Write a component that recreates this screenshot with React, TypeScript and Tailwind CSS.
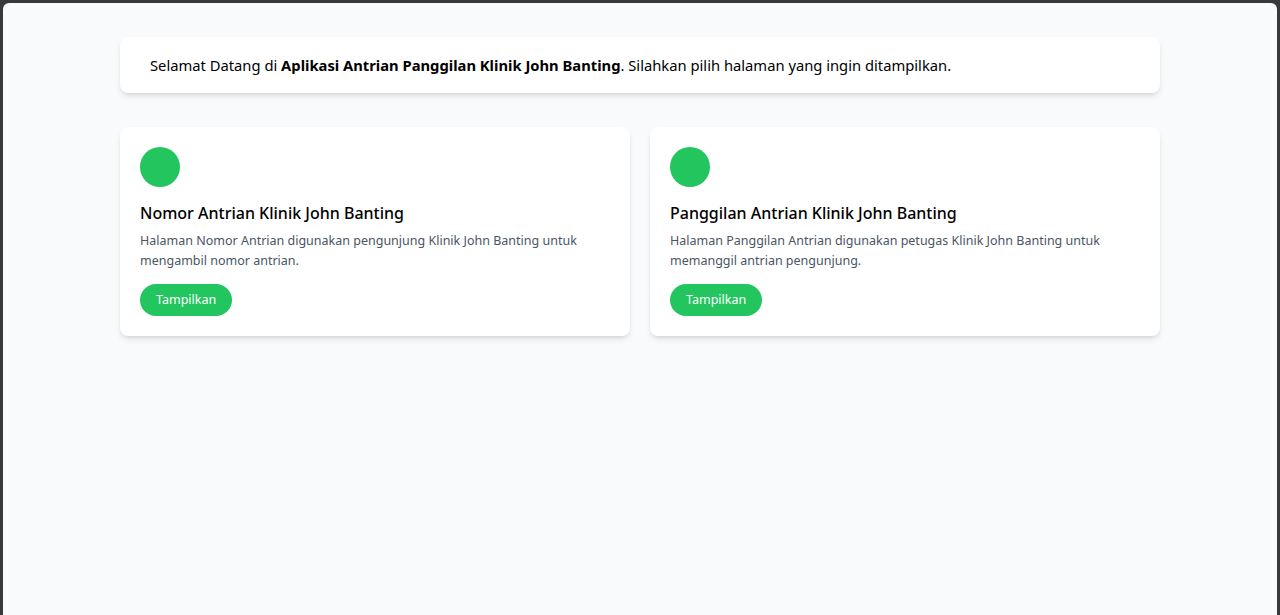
const cards = [
  {
    title: "Nomor Antrian Klinik John Banting",
    desc: "Halaman Nomor Antrian digunakan pengunjung Klinik John Banting untuk mengambil nomor antrian.",
  },
  {
    title: "Panggilan Antrian Klinik John Banting",
    desc: "Halaman Panggilan Antrian digunakan petugas Klinik John Banting untuk memanggil antrian pengunjung.",
  },
];

const App = () => {
  return (
    <div className="w-full h-[615px] bg-[#3a3a3a] pt-[3px] px-[3px] font-['Noto_Sans',sans-serif]">
      <main className="h-full bg-gray-50 rounded-t-md pt-[34px]">
        <div className="w-[1040px] mx-auto">
          <section className="bg-white rounded-lg shadow-md px-[30px] h-14 flex items-center text-[14.75px] text-black">
            <p>
              Selamat Datang di{" "}
              <span className="font-bold">Aplikasi Antrian Panggilan Klinik John Banting</span>.
              Silahkan pilih halaman yang ingin ditampilkan.
            </p>
          </section>

          <div className="grid grid-cols-2 gap-5 mt-[34px]">
            {cards.map((card) => (
              <div key={card.title} className="bg-white rounded-lg shadow-md p-5">
                <div className="w-10 h-10 rounded-full bg-[#22c55e]" />
                <h2 className="mt-[14px] text-[16px] font-medium text-black leading-6">
                  {card.title}
                </h2>
                <p className="mt-[6px] text-[12.5px] leading-5 text-gray-600">
                  {card.desc}
                </p>
                <button className="mt-[13px] h-8 px-4 rounded-full bg-[#22c55e] text-white text-[12.5px]">
                  Tampilkan
                </button>
              </div>
            ))}
          </div>
        </div>
      </main>
    </div>
  );
};

export default App;
